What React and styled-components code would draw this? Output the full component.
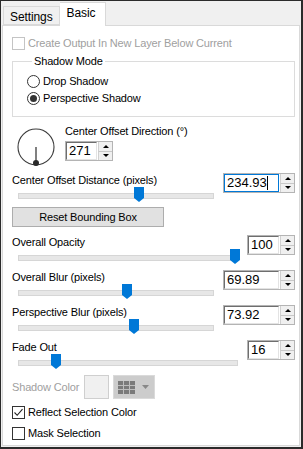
import React from 'react';
import styled, { createGlobalStyle } from 'styled-components';

const GlobalStyle = createGlobalStyle`
  html, body {
    margin: 0;
    padding: 0;
    background: #ffffff;
  }
  body {
    font-family: "Liberation Sans", Arial, sans-serif;
    font-size: 11px;
    color: #000;
  }
`;

const sliders = [
  { label: 'Center Offset Distance (pixels)', value: '234.93', pos: 0.62, wide: true, focused: true },
];
const lowerSliders = [
  { label: 'Overall Opacity', value: '100', pos: 0.99, wide: false },
  { label: 'Overall Blur (pixels)', value: '69.89', pos: 0.557, wide: true },
  { label: 'Perspective Blur (pixels)', value: '73.92', pos: 0.593, wide: true },
  { label: 'Fade Out', value: '16', pos: 0.17, wide: false },
];

const CheckIcon = () => (
  <svg width="11" height="11" viewBox="0 0 11 11">
    <path d="M1.5 5.5 L4.2 8.3 L9.5 2.2" fill="none" stroke="#222" strokeWidth="1.1" />
  </svg>
);

const Spin = ({ value, wide, focused }) => (
  <SpinBox>
    <SpinInput $wide={wide} $focused={focused}>
      {value}
      {focused && <Caret />}
    </SpinInput>
    <SpinButtons>
      <SpinBtn><Arrow $up /></SpinBtn>
      <SpinBtn><Arrow /></SpinBtn>
    </SpinButtons>
  </SpinBox>
);

const Slider = ({ label, value, pos, wide, focused }) => (
  <SliderRow>
    <SliderCol>
      <Label>{label}</Label>
      <Track>
        <Thumb style={{ left: `calc(${pos * 100}% - 5px)` }}>
          <svg width="10" height="15" viewBox="0 0 10 15">
            <path d="M0 0 H10 V11 L5 15 L0 11 Z" fill="#0078d7" />
          </svg>
        </Thumb>
      </Track>
    </SliderCol>
    <Spin value={value} wide={wide} focused={focused} />
  </SliderRow>
);

const App = () => (
  <>
    <GlobalStyle />
    <Window>
      <TabBar>
        <Tab>Settings</Tab>
        <Tab $active>Basic</Tab>
      </TabBar>
      <Panel>
        <CheckRow $disabled>
          <Box $disabled />
          <span>Create Output In New Layer Below Current</span>
        </CheckRow>

        <Group>
          <Legend>Shadow Mode</Legend>
          <RadioRow>
            <Radio />
            <span>Drop Shadow</span>
          </RadioRow>
          <RadioRow>
            <Radio $checked />
            <span>Perspective Shadow</span>
          </RadioRow>
        </Group>

        <DialSection>
          <Dial width="38" height="38" viewBox="0 0 38 38">
            <circle cx="19" cy="19" r="18" fill="none" stroke="#3c3c3c" strokeWidth="1.1" />
            <line x1="19" y1="19" x2="19" y2="35" stroke="#3c3c3c" strokeWidth="1.3" />
            <circle cx="19" cy="35" r="3" fill="#2a2a2a" />
          </Dial>
          <DialCol>
            <Label>Center Offset Direction (°)</Label>
            <Spin value="271" />
          </DialCol>
        </DialSection>

        {sliders.map((s) => <Slider key={s.label} {...s} />)}

        <ResetButton>Reset Bounding Box</ResetButton>

        <Lower>
          {lowerSliders.map((s) => <Slider key={s.label} {...s} />)}
        </Lower>

        <ColorRow>
          <DisabledLabel>Shadow Color</DisabledLabel>
          <Swatch />
          <PickerButton>
            <svg width="17" height="13" viewBox="0 0 17 13">
              <rect x="0" y="0" width="17" height="13" fill="#7a7a7a" />
              <path d="M5.5 0 V13 M11.5 0 V13 M0 4.5 H17 M0 8.5 H17" stroke="#bdbdbd" strokeWidth="1" />
            </svg>
            <svg width="7" height="4" viewBox="0 0 7 4">
              <path d="M0 0 H7 L3.5 4 Z" fill="#888" />
            </svg>
          </PickerButton>
        </ColorRow>

        <CheckRow>
          <Box><CheckIcon /></Box>
          <span>Reflect Selection Color</span>
        </CheckRow>
        <CheckRow $gap>
          <Box />
          <span>Mask Selection</span>
        </CheckRow>
      </Panel>
    </Window>
  </>
);

const Window = styled.div`
  width: 303px;
  height: 449px;
  box-sizing: border-box;
  border-top: 1px solid #2b2b2b;
  border-left: 1px solid #2b2b2b;
  border-right: 2px solid #2b2b2b;
  border-bottom: 2px solid #2b2b2b;
  background: #f0f0f0;
  display: flex;
  flex-direction: column;
  padding: 1px;
`;

const TabBar = styled.div`
  display: flex;
  align-items: flex-end;
  height: 23px;
  padding-left: 1px;
`;

const Tab = styled.div`
  box-sizing: border-box;
  height: ${(p) => (p.$active ? '24px' : '19px')};
  margin-bottom: ${(p) => (p.$active ? '-1px' : '0')};
  padding: ${(p) => (p.$active ? '3px 10px 0 7px' : '3px 6px 0 6px')};
  background: ${(p) => (p.$active ? '#ffffff' : '#f0f0f0')};
  border: 1px solid #d9d9d9;
  border-bottom: ${(p) => (p.$active ? 'none' : '1px solid #d9d9d9')};
  border-left: ${(p) => (p.$active ? 'none' : '1px solid #d9d9d9')};
  position: relative;
  z-index: ${(p) => (p.$active ? 1 : 0)};
  font-size: 12px;
  letter-spacing: -0.1px;
`;

const Panel = styled.div`
  flex: 1;
  background: #ffffff;
  border: 1px solid #d9d9d9;
  padding: 10px 4px 0 9px;
  display: flex;
  flex-direction: column;
  font-size: 11px;
  letter-spacing: -0.15px;
`;

const CheckRow = styled.div`
  display: flex;
  align-items: center;
  gap: 3px;
  height: 14px;
  margin-top: ${(p) => (p.$gap ? '7px' : '0')};
  color: ${(p) => (p.$disabled ? '#a0a0a0' : '#000')};
`;

const Box = styled.div`
  width: 13px;
  height: 13px;
  box-sizing: border-box;
  border: 1px solid ${(p) => (p.$disabled ? '#c4c4c4' : '#333')};
  background: #fff;
  display: flex;
  align-items: center;
  justify-content: center;
`;

const Group = styled.fieldset`
  margin: 4px 0 0 0;
  padding: 6px 0 11px 14px;
  border: 1px solid #dcdcdc;
  display: flex;
  flex-direction: column;
  gap: 3px;
  min-width: 0;
`;

const Legend = styled.legend`
  padding: 0 2px;
  margin-left: 5px;
  line-height: 14px;
`;

const RadioRow = styled.div`
  display: flex;
  align-items: center;
  gap: 3px;
  height: 14px;
`;

const Radio = styled.div`
  width: 13px;
  height: 13px;
  box-sizing: border-box;
  border-radius: 50%;
  border: 1px solid #333;
  background: #fff;
  display: flex;
  align-items: center;
  justify-content: center;
  &::after {
    content: '';
    width: 7px;
    height: 7px;
    border-radius: 50%;
    background: ${(p) => (p.$checked ? '#333' : 'transparent')};
  }
`;

const DialSection = styled.div`
  display: flex;
  align-items: flex-start;
  gap: 10px;
  margin-top: 7px;
  height: 49px;
`;

const Dial = styled.svg`
  margin-left: 5px;
  margin-top: 4px;
  flex-shrink: 0;
`;

const DialCol = styled.div`
  display: flex;
  flex-direction: column;
  align-items: flex-start;
  gap: 3px;
`;

const Label = styled.div`
  line-height: 14px;
  white-space: nowrap;
`;

const DisabledLabel = styled(Label)`
  color: #a0a0a0;
  margin-right: 5px;
`;

const SliderRow = styled.div`
  display: flex;
  align-items: flex-start;
  height: 35px;
  box-sizing: border-box;
`;

const SliderCol = styled.div`
  flex: 1;
  display: flex;
  flex-direction: column;
  padding-right: 9px;
`;

const Track = styled.div`
  position: relative;
  margin: 6px 0 0 6px;
  height: 4px;
  background: #e7e7e7;
  border: 1px solid #d6d6d6;
`;

const Thumb = styled.div`
  position: absolute;
  top: -7px;
  width: 10px;
  height: 15px;
  line-height: 0;
`;

const SpinBox = styled.div`
  display: flex;
  flex-shrink: 0;
  height: 20px;
  border: 1px solid #b4b4b4;
  box-sizing: border-box;
`;

const SpinInput = styled.div`
  width: ${(p) => (p.$wide ? '55px' : '31px')};
  box-sizing: border-box;
  background: #fff;
  border: 1px solid ${(p) => (p.$focused ? '#0078d7' : '#6e6e6e')};
  border-right-color: ${(p) => (p.$focused ? '#0078d7' : '#e3e3e3')};
  border-bottom-color: ${(p) => (p.$focused ? '#0078d7' : '#e3e3e3')};
  font-size: 13px;
  letter-spacing: 0;
  line-height: 16px;
  padding-left: 2px;
  display: flex;
  align-items: center;
`;

const Caret = styled.span`
  display: inline-block;
  width: 1px;
  height: 14px;
  background: #000;
`;

const SpinButtons = styled.div`
  display: flex;
  flex-direction: column;
  margin-left: 1px;
`;

const SpinBtn = styled.div`
  width: 14px;
  flex: 1;
  box-sizing: border-box;
  background: #f0f0f0;
  border-left: 1px solid #d0d0d0;
  & + & {
    border-top: 1px solid #c8c8c8;
  }
  display: flex;
  align-items: center;
  justify-content: center;
`;

const Arrow = styled.span`
  width: 0;
  height: 0;
  border-left: 3px solid transparent;
  border-right: 3px solid transparent;
  border-bottom: ${(p) => (p.$up ? '3px solid #000' : 'none')};
  border-top: ${(p) => (p.$up ? 'none' : '3px solid #000')};
`;

const ResetButton = styled.div`
  width: 152px;
  height: 20px;
  box-sizing: border-box;
  margin-top: -1px;
  background: #e1e1e1;
  border: 1px solid #adadad;
  display: flex;
  align-items: center;
  justify-content: center;
`;

const Lower = styled.div`
  margin-top: 8px;
  display: flex;
  flex-direction: column;
`;

const ColorRow = styled.div`
  display: flex;
  align-items: center;
  height: 24px;
  margin-bottom: 6px;
`;

const Swatch = styled.div`
  width: 25px;
  height: 24px;
  box-sizing: border-box;
  background: #f0f0f0;
  border: 1px solid #cfcfcf;
`;

const PickerButton = styled.div`
  margin-left: 4px;
  width: 42px;
  height: 24px;
  box-sizing: border-box;
  background: #cccccc;
  border: 1px solid #dadada;
  display: flex;
  align-items: center;
  gap: 7px;
  padding-left: 4px;
`;

export default App;
